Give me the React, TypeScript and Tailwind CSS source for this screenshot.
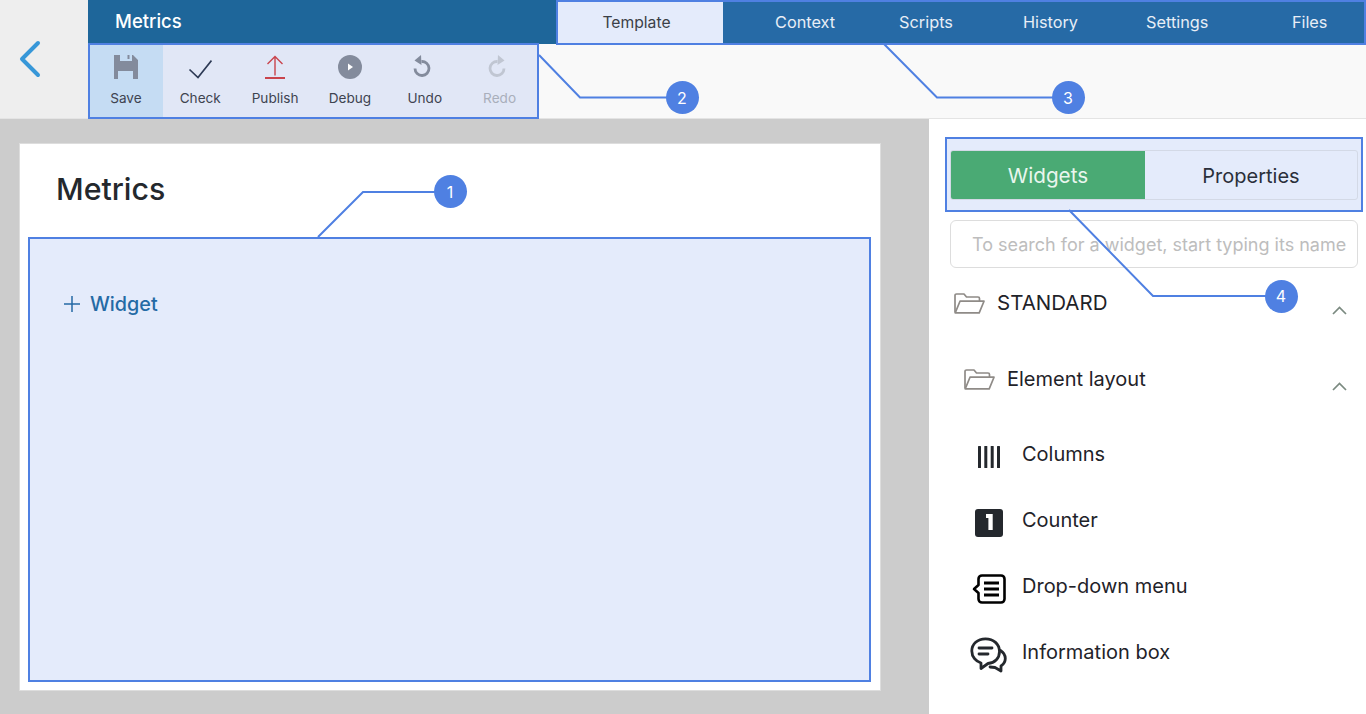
import React from "react";

const Folder = () => (
  <svg width="31" height="21" viewBox="0 0 31 21" fill="none" stroke="#8f8b87" strokeWidth="1.7" strokeLinejoin="round">
    <path d="M1 19.5V2.5C1 1.600 1.600 1 2.500 1H10L12.500 4H24C25 4 25.500 4.600 25.500 5.500V8" />
    <path d="M1.200 19.800L6 8.200H30L25.200 19.800Z" />
  </svg>
);

const Chevron = () => (
  <svg width="15" height="9" viewBox="0 0 15 9" fill="none" stroke="#7b8a80" strokeWidth="1.7">
    <path d="M1 8L7.500 1.500L14 8" />
  </svg>
);

const tools = [
  {
    label: "Save",
    icon: (
      <svg width="24" height="24" viewBox="0 0 24 24" fill="#838b9c">
        <path d="M0 0H6V6H18V0H19L24 5V24H19V16H4V24H0Z" />
        <path d="M13.500 0H15.500V4H13.500Z" />
      </svg>
    ),
  },
  {
    label: "Check",
    icon: (
      <svg width="24" height="24" viewBox="0 0 24 24" fill="none" stroke="#2d3a55" strokeWidth="1.700">
        <path d="M1.500 14.500L10 22.500L23.500 5.500" />
      </svg>
    ),
  },
  {
    label: "Publish",
    icon: (
      <svg width="20" height="24" viewBox="0 0 20 24" fill="none" stroke="#c9444c" strokeWidth="1.400">
        <path d="M10 20.500V1.500M2.500 9L10 1.500L17.500 9" />
        <path d="M0 23H20" strokeWidth="2" />
      </svg>
    ),
  },
  {
    label: "Debug",
    icon: (
      <svg width="24" height="24" viewBox="0 0 24 24">
        <circle cx="12" cy="12" r="12" fill="#838b9c" />
        <path d="M10 8.500L15 12L10 15.500Z" fill="#fff" />
      </svg>
    ),
  },
  {
    label: "Undo",
    icon: (
      <svg className="mb-[2px] mr-[6px]" width="18" height="22" viewBox="0 0 18 22" fill="none" stroke="#838b9c" strokeWidth="2.800">
        <path d="M8.500 6.500A7 7 0 1 1 2 13.500" />
        <path d="M8 0L1.500 5.500L8.500 10Z" fill="#838b9c" stroke="none" />
      </svg>
    ),
  },
  {
    label: "Redo",
    icon: (
      <svg className="mb-[2px] mr-[6px]" width="18" height="22" viewBox="0 0 18 22" fill="none" stroke="#c0c6d2" strokeWidth="2.800">
        <path d="M9.500 6.500A7 7 0 1 0 16 13.500" />
        <path d="M10 0L16.500 5.500L9.500 10Z" fill="#c0c6d2" stroke="none" />
      </svg>
    ),
  },
];

const tabs = [
  { label: "Context", className: "ml-[52px]" },
  { label: "Scripts", className: "ml-[64px]" },
  { label: "History", className: "ml-[70px]" },
  { label: "Settings", className: "ml-[68px]" },
  { label: "Files", className: "ml-[83.500px]" },
];

const widgets = [
  {
    label: "Columns",
    icon: (
      <svg width="22" height="22" viewBox="0 0 22 22" fill="#24282d">
        <rect x="0" y="0" width="3" height="22" rx="0.500" />
        <rect x="6.300" y="0" width="3" height="22" rx="0.500" />
        <rect x="12.700" y="0" width="3" height="22" rx="0.500" />
        <rect x="19" y="0" width="3" height="22" rx="0.500" />
      </svg>
    ),
  },
  {
    label: "Counter",
    icon: (
      <svg width="28" height="28" viewBox="0 0 28 28">
        <rect x="0" y="0" width="28" height="28" rx="3" fill="#24282d" />
        <path d="M11 5H17.700V21H13.400V9H11Z" fill="#fff" />
      </svg>
    ),
  },
  {
    label: "Drop-down menu",
    icon: (
      <svg width="36" height="30" viewBox="0 0 36 30" fill="none" stroke="#000" strokeWidth="2.600">
        <path d="M7.500 5C7.500 3 9 1.500 11 1.500H30C32 1.500 33.500 3 33.500 5V25C33.500 27 32 28.500 30 28.500H11C9 28.500 7.500 27 7.500 25V19L3 15L7.500 11Z" strokeLinejoin="round" />
        <path d="M13 9H28M13 15H28M13 21H28" strokeWidth="2.800" />
      </svg>
    ),
  },
  {
    label: "Information box",
    icon: (
      <svg width="37" height="36" viewBox="0 0 37 36" fill="none" stroke="#24282d" strokeWidth="2.800" strokeLinecap="round" strokeLinejoin="round">
        <path d="M15.500 1.800C7.500 1.800 1.800 7 1.800 14C1.800 20 6 24.500 11 26V31.500L18 26.500C25 26 29.500 21 29.500 14.500C29.500 7 23.500 1.800 15.500 1.800Z" />
        <path d="M9 11H22M9 17H18" />
        <path d="M30.500 13.500C33.500 15.500 35.300 18.500 35.300 21.500C35.300 25 33.300 27.500 31 29V34L25 30.500L20 30" />
      </svg>
    ),
  },
];

const callouts = [
  { n: "1", x: 450, y: 191.5, d: "M318 237L363 192H436" },
  { n: "2", x: 682, y: 97.5, d: "M539 55L580 97.500H668" },
  { n: "3", x: 1068, y: 97.5, d: "M884 44L937 97.500H1054" },
  { n: "4", x: 1281, y: 296, d: "M1069 210L1153 296H1267" },
];

export default function App() {
  return (
    <div className="relative h-[714px] w-[1366px] overflow-hidden bg-white font-['Inter',sans-serif]">
      <header className="flex h-[119px] border-b border-[#e4e4e4] bg-[#f9f9f9]">
        <div className="flex w-[88px] items-center bg-[#eeeeee] pl-[18px]">
          <svg width="24" height="38" viewBox="0 0 24 38" fill="none" stroke="#3797d8" strokeWidth="4" strokeLinecap="round" strokeLinejoin="round">
            <path d="M20 3L4 19L20 35" />
          </svg>
        </div>
        <div className="flex min-w-0 flex-1 flex-col">
          <div className="flex h-[44px] shrink-0 items-start bg-[#1e669a]">
            <div className="flex h-[44px] w-[468px] items-center pl-[27px] text-[18.500px] font-medium text-white">Metrics</div>
            <nav className="flex h-[45px] flex-1 items-center border-2 border-[#4f80e2] bg-[#266aa6] text-[16.300px] text-[#e8eef6]">
              <div className="flex h-full w-[165px] items-center justify-center bg-[#e4ebfb] pr-[8px] text-[15.700px] text-[#3b3f47]">Template</div>
              {tabs.map((t) => (
                <span key={t.label} className={t.className}>
                  {t.label}
                </span>
              ))}
            </nav>
          </div>
          <div className="-mt-px flex h-[76px] w-[451px] shrink-0 border-2 border-[#4f80e2] bg-[#e1e7f6]">
            {tools.map((t, i) => (
              <div
                key={t.label}
                className={
                  i === 0
                    ? "flex h-full w-[73px] flex-col items-center bg-[#c5dcf3] pr-[1px]"
                    : "flex h-full w-[75px] flex-col items-center"
                }
              >
                <div className="flex h-[44px] w-full shrink-0 items-center justify-center">{t.icon}</div>
                <span className={i === 5 ? "text-[13.600px] leading-[18px] text-[#a9afbb]" : "text-[13.600px] leading-[18px] text-[#3e4350]"}>{t.label}</span>
              </div>
            ))}
          </div>
        </div>
      </header>

      <main className="flex h-[595px]">
        <section className="w-[929px] bg-[#cccccc] pl-[19px] pt-[24px]">
          <div className="h-[548px] w-[862px] border border-[#dddddd] bg-white pl-[8px] pt-[26px]">
            <h1 className="pl-[28px] text-[30.300px] font-medium leading-[38px] text-[#24282d]">Metrics</h1>
            <div className="mt-[29px] h-[445px] w-[843px] border-2 border-[#4f80e2] bg-[#e4ebfb] pl-[34px] pt-[51px]">
              <div className="flex items-center gap-[10px] text-[19.800px] font-medium leading-[28px] text-[#246aa5]">
                <svg width="16" height="16" viewBox="0 0 16 16" fill="none" stroke="#246aa5" strokeWidth="1.500">
                  <path d="M8 0V16M0 8H16" />
                </svg>
                Widget
              </div>
            </div>
          </div>
        </section>

        <aside className="flex-1 pl-[16px] pt-[18px]">
          <div className="h-[75px] w-[418px] border-2 border-[#4f80e2] bg-[#e4ebfb] pl-[3px] pt-[11px]">
            <div className="flex h-[50px] w-[408px] overflow-hidden rounded-[3px] border border-[#d3d9e6]">
              <div className="flex w-[194px] items-center justify-center bg-[#4aaa74] pt-[1px] text-[20.700px] text-[#e9f6ee]">Widgets</div>
              <div className="flex flex-1 items-center justify-center pt-[1px] text-[20px] text-[#2a2f3a]">Properties</div>
            </div>
          </div>
          <div className="ml-[5px] mt-[8px] flex h-[48px] w-[408px] items-center rounded-[6px] border border-[#dddddd] pl-[21px] pt-[1px] text-[18px] whitespace-nowrap text-[#bdbdbd]">
            To search for a widget, start typing its name
          </div>
          <div className="ml-[9px] mt-[23px] flex h-[24px] w-[393px] items-center">
            <Folder />
            <span className="ml-[12px] flex-1 text-[20.500px] text-[#1f2329]">STANDARD</span>
            <span className="mt-[14px]">
              <Chevron />
            </span>
          </div>
          <div className="ml-[19px] mt-[52px] flex h-[24px] w-[383px] items-center">
            <Folder />
            <span className="ml-[12px] flex-1 text-[20px] text-[#1f2329]">Element layout</span>
            <span className="mt-[14px]">
              <Chevron />
            </span>
          </div>
          <ul className="mt-[30px]">
            {widgets.map((w) => (
              <li key={w.label} className="flex h-[66px] items-center">
                <div className="flex w-[77px] justify-center pl-[10px] pt-[5px]">{w.icon}</div>
                <span className="text-[20px] leading-[24px] text-[#1f2329]">{w.label}</span>
              </li>
            ))}
          </ul>
        </aside>
      </main>

      <svg className="pointer-events-none absolute left-0 top-0" width="1366" height="714" fill="none" stroke="#4f80e2" strokeWidth="2">
        {callouts.map((c) => (
          <path key={c.n} d={c.d} />
        ))}
      </svg>
      {callouts.map((c) => (
        <div
          key={c.n}
          className="absolute flex h-[33px] w-[33px] items-center justify-center rounded-full bg-[#4f80e2] text-[16px] text-white"
          style={{ left: c.x - 16.5, top: c.y - 16.5 }}
        >
          {c.n}
        </div>
      ))}
    </div>
  );
}
